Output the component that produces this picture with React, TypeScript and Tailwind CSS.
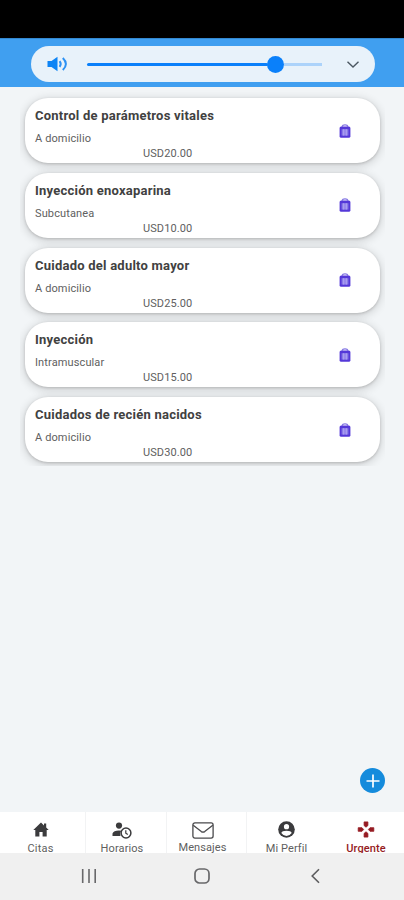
import { useState } from "react";

type Service = {
  id: number;
  title: string;
  place: string;
  price: string;
};

const initialServices: Service[] = [
  { id: 1, title: "Control de parámetros vitales", place: "A domicilio", price: "20.00" },
  { id: 2, title: "Inyección enoxaparina", place: "Subcutanea", price: "10.00" },
  { id: 3, title: "Cuidado del adulto mayor", place: "A domicilio", price: "25.00" },
  { id: 4, title: "Inyección", place: "Intramuscular", price: "15.00" },
  { id: 5, title: "Cuidados de recién nacidos", place: "A domicilio", price: "30.00" },
];

function VolumeBar() {
  return (
    <div className="ml-px flex h-9 w-[344px] items-center rounded-full bg-[#e8f2fa] pl-4 pr-[15px]">
      <svg width="21" height="16" viewBox="0 0 21 16" fill="none">
        <path d="M0.5 5H4.5L10.5 0.8V15.2L4.5 11H0.5Z" fill="#0d84f5" />
        <path d="M12.6 5.2Q14.8 8 12.6 10.8" stroke="#2b91f4" strokeWidth="2" />
        <path d="M15.8 2Q22 8 15.8 14" stroke="#2b91f4" strokeWidth="2" />
      </svg>
      <div className="ml-[19px] flex w-[235px] items-center">
        <div className="h-[3px] w-[181px] rounded-full bg-[#0a80fa]" />
        <div className="-ml-px size-[17px] rounded-full bg-[#0a80fa]" />
        <div className="h-[3px] flex-1 bg-[#acd3fa]" />
      </div>
      <svg className="ml-auto" width="14" height="9" viewBox="0 0 14 9" fill="none" stroke="#4c5862" strokeWidth="1.4">
        <path d="M1.5 1.8L7 7L12.5 1.8" />
      </svg>
    </div>
  );
}

function TrashIcon() {
  return (
    <svg width="12" height="14" viewBox="0 0 12 14">
      <path d="M3.2 2.6C3.6 0.2 8.4 0.2 8.8 2.6" fill="none" stroke="#8577e3" strokeWidth="1.3" />
      <rect x="0.6" y="2.4" width="10.8" height="11.4" rx="1.6" fill="#5438d8" />
      <rect x="2.6" y="5.2" width="6.8" height="6.4" fill="#8b7ce8" />
      <path d="M4.8 5.2V11.6M7.2 5.2V11.6" stroke="#b7acf3" strokeWidth="1" />
    </svg>
  );
}

function ServiceCard({ service, onRemove }: { service: Service; onRemove: (id: number) => void }) {
  return (
    <div className="flex h-[65px] items-center rounded-[23px] bg-white pl-[10px] pr-[29px] shadow-[0_1px_3px_rgba(0,0,0,0.18),0_2px_8px_2px_rgba(0,0,0,0.12)]">
      <div className="h-full flex-1 pt-[10px] text-[#606060]">
        <h2 className="text-[13px] leading-4 font-bold tracking-[0.23px] text-[#414141]">{service.title}</h2>
        <p className="mt-[9px] text-[11px] leading-3 tracking-[0.12px]">{service.place}</p>
        <p className="ml-[108px] mt-[3px] text-[11px] leading-3 tracking-[0.1px]">USD{service.price}</p>
      </div>
      <button onClick={() => onRemove(service.id)} aria-label="Eliminar">
        <TrashIcon />
      </button>
    </div>
  );
}

function HomeIcon() {
  return (
    <svg className="shrink-0" width="16" height="15" viewBox="0 0 16 15" fill="#3b3b3d">
      <path d="M8 0.5L0.3 8H2.3V14.5H6.4V10H9.6V14.5H13.7V8H15.7L13.2 5.5V1.5H11V3.4Z" />
    </svg>
  );
}

function ScheduleIcon() {
  return (
    <svg className="shrink-0" width="20" height="17" viewBox="0 0 20 17">
      <circle cx="7" cy="3.6" r="3.1" fill="#3b3b3d" />
      <path d="M0.5 14V11.6Q1.5 8.5 7 8.5Q8.5 8.5 9.2 8.8Q7.4 11 8.5 14Z" fill="#3b3b3d" />
      <circle cx="14" cy="11" r="4.9" fill="white" stroke="#3b3b3d" strokeWidth="1.5" />
      <path d="M13.8 8.2V11.2L15.8 12.5" fill="none" stroke="#3b3b3d" strokeWidth="1.2" />
    </svg>
  );
}

function MailIcon() {
  return (
    <svg className="shrink-0" width="22" height="17" viewBox="0 0 22 17" fill="none" stroke="#4a4a4c" strokeWidth="1.3">
      <rect x="0.9" y="0.9" width="20.2" height="15.2" rx="2" />
      <path d="M1.2 3.2L9.3 9.6Q11 10.8 12.7 9.6L20.8 3.2" />
    </svg>
  );
}

function ProfileIcon() {
  return (
    <svg className="shrink-0" width="17" height="17" viewBox="0 0 17 17">
      <circle cx="8.5" cy="8.5" r="8.3" fill="#3b3b3d" />
      <circle cx="8.5" cy="5.7" r="2.6" fill="white" />
      <path d="M3.3 12Q4 9.8 8.5 9.8Q13 9.8 13.7 12Q11.8 14.9 8.5 14.9Q5.2 14.9 3.3 12Z" fill="white" />
    </svg>
  );
}

function UrgentIcon() {
  return (
    <svg className="shrink-0" width="18" height="17" viewBox="0 0 18 17" fill="#951b22" stroke="#951b22" strokeWidth="0.8" strokeLinejoin="round">
      <path d="M7.1 0.9H10.9V4.6L9 6.2L7.1 4.6Z" />
      <path d="M7.1 16.1H10.9V12.4L9 10.8L7.1 12.4Z" />
      <path d="M1.2 6.7H5L6.6 8.5L5 10.3H1.2Z" />
      <path d="M16.8 6.7H13L11.4 8.5L13 10.3H16.8Z" />
    </svg>
  );
}

export default function App() {
  const [services, setServices] = useState(initialServices);

  function removeService(id: number) {
    setServices(services.filter((s) => s.id !== id));
  }

  return (
    <div className="flex h-[900px] w-[404px] flex-col overflow-hidden bg-[#f2f5f7] font-[Roboto,sans-serif]">
      <div className="h-[38px] shrink-0 bg-black" />
      <header className="flex h-[49px] shrink-0 justify-center border-t border-[#3388d0] bg-[#409ff0] pt-[7px]">
        <VolumeBar />
      </header>

      <main className="flex min-h-0 flex-1 flex-col">
        <div className="mr-[19px] ml-5 overflow-hidden px-[5px] pt-[11px] pb-1">
          <div className="flex flex-col gap-[9.8px]">
            {services.map((s) => (
              <ServiceCard key={s.id} service={s} onRemove={removeService} />
            ))}
          </div>
        </div>
        <button aria-label="Agregar" className="mt-auto mr-[19px] mb-[19px] flex size-[25px] items-center justify-center self-end rounded-full bg-[#158bdc]">
          <svg width="14" height="14" viewBox="0 0 14 14" stroke="white" strokeWidth="1.7">
            <path d="M7 0.5V13.5M0.5 7H13.5" />
          </svg>
        </button>
      </main>

      <nav className="flex h-[41px] shrink-0 overflow-hidden bg-white text-[11px] leading-3 text-[#606060]">
        <div className="flex w-[86px] flex-col items-center border-r border-[#f2f3f4] pt-[10px] pr-[4px]">
          <HomeIcon />
          <span className="mt-[6px] tracking-[0.2px]">Citas</span>
        </div>
        <div className="flex w-[81px] flex-col items-center border-r border-[#f2f3f4] pt-[10px] pr-[8px]">
          <ScheduleIcon />
          <span className="mt-[4px] tracking-[0.1px]">Horarios</span>
        </div>
        <div className="flex w-[80px] flex-col items-center border-r border-[#f2f3f4] pt-[10px] pr-[8px]">
          <MailIcon />
          <span className="mt-[3px] tracking-[0.1px]">Mensajes</span>
        </div>
        <div className="flex w-[79px] flex-col items-center pt-[9px]">
          <ProfileIcon />
          <span className="mt-[5px] tracking-[0.1px]">Mi Perfil</span>
        </div>
        <div className="flex w-[78px] flex-col items-center pt-[9px] pl-[2px] text-[#951b22]">
          <UrgentIcon />
          <span className="mt-[5px] font-medium tracking-[0.1px]">Urgente</span>
        </div>
      </nav>

      <footer className="flex h-[47px] shrink-0 bg-[#f0f0f0] pt-[15px] pl-[81px]">
        <svg width="16" height="16" viewBox="0 0 16 16" stroke="#68686a" strokeWidth="1.6">
          <path d="M1.7 1V15M8 1V15M14.2 1V15" />
        </svg>
        <svg className="ml-[97px]" width="16" height="16" viewBox="0 0 16 16" fill="none" stroke="#68686a" strokeWidth="1.7">
          <rect x="1" y="1" width="14" height="14" rx="4.5" />
        </svg>
        <svg className="ml-[101px]" width="9" height="16" viewBox="0 0 9 16" fill="none" stroke="#5c5c5e" strokeWidth="1.6">
          <path d="M8 1.2L1.2 8L8 14.8" />
        </svg>
      </footer>
    </div>
  );
}
